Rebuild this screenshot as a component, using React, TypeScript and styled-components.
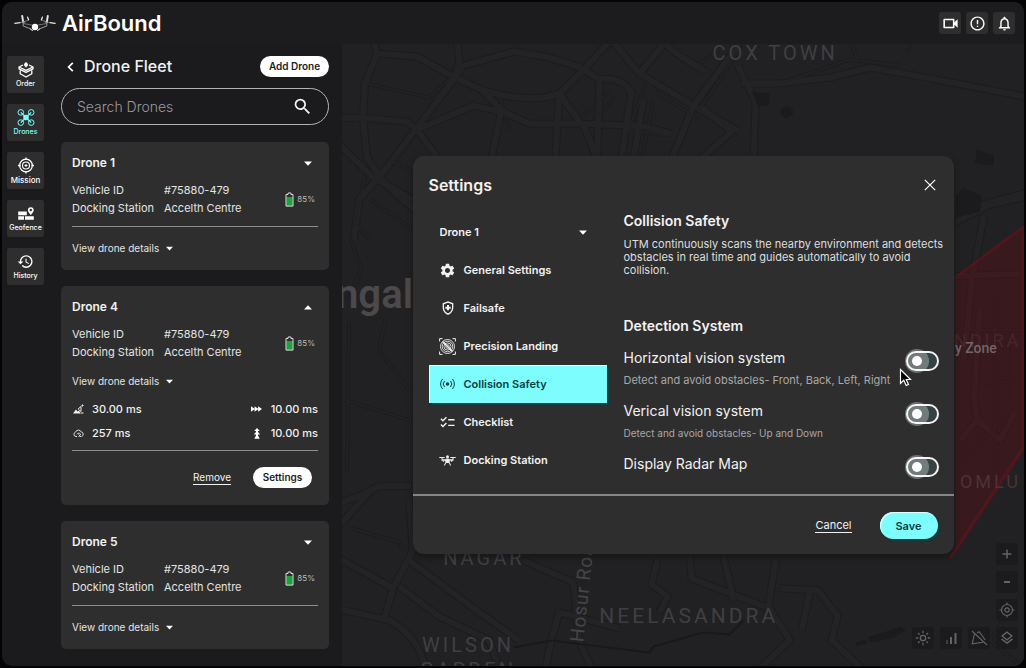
import React from "react";
import styled, { createGlobalStyle, css } from "styled-components";
import {
  MdOutlineVideocam,
  MdErrorOutline,
  MdNotificationsNone,
  MdHistory,
  MdSettings,
  MdOutlineHealthAndSafety,
  MdChecklist,
  MdSearch,
  MdOutlineLayers,
} from "react-icons/md";

const color = {
  bar: "#1c1c1e",
  panel: "#1b1b1d",
  card: "#2e2e2e",
  line: "#8f8f8f",
  text: "#f2f2f2",
  muted: "#a8a8a8",
  cyan: "#7dfdfe",
  teal: "#0a3f42",
};

const GlobalStyle = createGlobalStyle`
  * { box-sizing: border-box; }
  body {
    margin: 0;
    background: #040404;
    color: ${color.text};
    font-family: Inter, "Liberation Sans", sans-serif;
    font-size: 11px;
  }
  button, input, select { font: inherit; color: inherit; }
  h1, h2, h3, p, dl, dd, dt, ul { margin: 0; padding: 0; }
`;

const Shell = styled.div`
  display: flex;
  flex-direction: column;
  min-height: calc(100vh - 4px);
  margin: 2px;
  border-radius: 10px;
  overflow: hidden;
  background: ${color.panel};
`;

/* ---------- top bar ---------- */

const TopBar = styled.header`
  display: flex;
  align-items: center;
  justify-content: space-between;
  height: 42px;
  padding: 0 9px 0 12px;
  background: ${color.bar};
`;

const Brand = styled.h1`
  display: flex;
  align-items: center;
  gap: 6px;
  font-size: 22px;
  font-weight: 600;
  line-height: 28px;
  color: #fff;
`;

const TopActions = styled.div`
  display: flex;
  gap: 5px;
`;

const SquareButton = styled.button<{ $dim?: boolean }>`
  display: grid;
  place-items: center;
  width: 22px;
  height: 22px;
  padding: 0;
  border: 0;
  border-radius: 3px;
  background: ${(p) => (p.$dim ? "#1b1b1d" : "#2e2e2e")};
  color: ${(p) => (p.$dim ? "#646464" : "#fff")};
`;

/* ---------- left columns ---------- */

const Workspace = styled.div`
  display: flex;
  flex: 1;
`;

const Rail = styled.nav`
  display: flex;
  flex-direction: column;
  gap: 11px;
  padding: 12px 0 0 5px;
`;

const RailItem = styled.button<{ $active?: boolean; $large?: boolean }>`
  display: flex;
  flex-direction: column;
  align-items: center;
  gap: 1px;
  width: 37px;
  height: 37px;
  padding: 5px 0 0;
  border: 0;
  border-radius: 2px;
  background: ${color.card};
  color: ${(p) => (p.$active ? color.cyan : "#fff")};
  font-size: ${(p) => (p.$large ? 8 : 7)}px;
  font-weight: 500;
  line-height: 10px;
  white-space: nowrap;
`;

const Fleet = styled.section`
  width: 298px;
  padding: 12px 13px 17px 17px;
`;

const FleetHead = styled.div`
  display: flex;
  align-items: center;
  height: 21px;
`;

const FleetTitle = styled.h2`
  flex: 1;
  font-size: 16px;
  font-weight: 500;
  line-height: 21px;
`;

const BackButton = styled.button`
  display: grid;
  place-items: center;
  width: 19px;
  height: 19px;
  margin-right: 4px;
  padding: 0;
  border: 0;
  background: none;
`;

const Pill = styled.button<{ $width: number }>`
  width: ${(p) => p.$width}px;
  height: 21px;
  padding: 0;
  border: 0;
  border-radius: 11px;
  background: #fff;
  color: #1d1d1d;
  font-size: 10px;
  font-weight: 600;
  line-height: 21px;
`;

const SearchBox = styled.label`
  display: flex;
  align-items: center;
  height: 37px;
  margin: 11px 0 17px;
  padding: 0 15px;
  border: 1px solid #b4b4b4;
  border-radius: 19px;
`;

const SearchInput = styled.input`
  flex: 1;
  min-width: 0;
  padding: 0;
  border: 0;
  outline: 0;
  background: none;
  font-size: 14px;
  font-weight: 300;
  &::placeholder { color: #9a9a9a; opacity: 1; }
`;

const CardList = styled.div`
  display: flex;
  flex-direction: column;
  gap: 16px;
`;

const Card = styled.article`
  padding: 13px 11px 15px;
  border-radius: 5px;
  background: ${color.card};
`;

const CardHead = styled.div`
  display: flex;
  align-items: center;
  justify-content: space-between;
  height: 16px;
`;

const CardTitle = styled.h3`
  font-size: 12px;
  font-weight: 600;
  line-height: 16px;
`;

const IconButton = styled.button`
  display: grid;
  place-items: center;
  width: 20px;
  height: 16px;
  padding: 0;
  border: 0;
  background: none;
`;

const CardInfo = styled.div`
  display: flex;
  align-items: center;
  justify-content: space-between;
  margin-top: 10px;
`;

const Facts = styled.dl`
  display: grid;
  grid-template-columns: 92px auto;
  line-height: 18px;
  color: #e4e4e4;
`;

const Battery = styled.span`
  display: flex;
  align-items: center;
  gap: 3px;
  padding-right: 3px;
  font-size: 8px;
  color: #bdbdbd;
`;

const Rule = styled.hr<{ $top: number }>`
  height: 1px;
  margin: ${(p) => p.$top}px 0 0;
  border: 0;
  background: ${color.line};
`;

const DetailsButton = styled.button<{ $open: boolean }>`
  display: flex;
  align-items: center;
  gap: 7px;
  margin-top: ${(p) => (p.$open ? 13 : 14)}px;
  padding: 0;
  border: 0;
  background: none;
  font-size: 10px;
  line-height: 14px;
  color: #e4e4e4;
`;

const Stats = styled.ul`
  display: grid;
  grid-template-columns: 1fr auto;
  margin-top: 9px;
  list-style: none;
  font-weight: 500;
  line-height: 24px;
`;

const Stat = styled.li`
  display: grid;
  grid-template-columns: 12px auto;
  align-items: center;
  justify-content: start;
  gap: 8px;

  svg { justify-self: center; }
`;

const CardActions = styled.div`
  display: flex;
  align-items: center;
  justify-content: flex-end;
  gap: 22px;
  padding: 16px 6px 2px 0;
`;

const TextLink = styled.button<{ $size: number }>`
  padding: 0;
  border: 0;
  border-bottom: 1px solid currentColor;
  background: none;
  font-size: ${(p) => p.$size}px;
  line-height: 13px;
`;

/* ---------- map ---------- */

const MapArea = styled.main`
  position: relative;
  display: grid;
  flex: 1;
  min-width: 0;
  place-items: center;
  background: #212123;
`;

const MapDrawing = styled.svg`
  position: absolute;
  inset: 0;
  width: 100%;
  height: 100%;
  font-family: Roboto, "Liberation Sans", sans-serif;
`;

const MapTools = styled.div`
  position: absolute;
  right: 6px;
  bottom: 17px;
  display: flex;
  flex-direction: column;
  align-items: flex-end;
  gap: 6px;
`;

const ToolRow = styled.div`
  display: flex;
  gap: 6px;
`;

/* ---------- settings dialog ---------- */

const Dialog = styled.section`
  position: relative;
  width: min(541px, calc(100% - 32px));
  border-radius: 11px;
  background: ${color.card};
  box-shadow: 0 3px 6px rgba(0, 0, 0, 0.35);
`;

const DialogHead = styled.header`
  display: flex;
  align-items: center;
  justify-content: space-between;
  padding: 16px 14px 15px 16px;
`;

const DialogTitle = styled.h2`
  font-size: 16px;
  font-weight: 600;
  line-height: 26px;
`;

const DialogBody = styled.div`
  display: grid;
  grid-template-columns: 178px 1fr;
  gap: 17px;
  padding: 0 0 15px 16px;
`;

const Menu = styled.nav`
  display: flex;
  flex-direction: column;
  font-weight: 600;
`;

const DronePicker = styled.label`
  display: grid;
  grid-template-columns: 1fr 8px;
  align-items: center;
  height: 38px;
  padding: 0 20px 0 11px;
`;

const DroneSelect = styled.select`
  grid-area: 1 / 1 / 2 / 3;
  width: 100%;
  padding: 0;
  border: 0;
  outline: 0;
  appearance: none;
  background: none;
`;

const PickerArrow = styled.span`
  display: grid;
  grid-area: 1 / 2;
  pointer-events: none;
`;

const MenuItem = styled.button<{ $active?: boolean }>`
  display: flex;
  align-items: center;
  gap: 7px;
  height: 38px;
  padding: 0 10px;
  border: 0;
  background: none;
  text-align: left;
  ${(p) =>
    p.$active &&
    css`
      background: ${color.cyan};
      color: ${color.teal};
      box-shadow: inset 1px 1px 0 #d8ffff, 2px 2px 0 ${color.teal};
    `}
`;

const MenuIcon = styled.span`
  display: grid;
  place-items: center;
  width: 18px;
`;

const Content = styled.div`
  padding-right: 4px;
`;

const SectionTitle = styled.h3`
  font-size: 14px;
  font-weight: 600;
  line-height: 16px;
`;

const Intro = styled.p`
  margin: 9px 0 41px;
  line-height: 13px;
  color: #dedede;
`;

const Option = styled.label`
  display: flex;
  justify-content: space-between;
  margin-top: 15px;
  padding-right: 11px;
`;

const OptionText = styled.span`
  display: flex;
  flex-direction: column;
  gap: 7px;
`;

const OptionName = styled.span`
  font-size: 14px;
  line-height: 18px;
`;

const OptionHint = styled.span<{ $small?: boolean }>`
  font-size: ${(p) => (p.$small ? 10 : 11)}px;
  line-height: 13px;
  color: ${color.muted};
`;

const Switch = styled.input`
  display: flex;
  align-items: center;
  width: 33px;
  height: 20px;
  margin: 2px 0 0;
  padding-left: 4px;
  border: 2px solid #f4f4f4;
  border-radius: 10px;
  appearance: none;
  background: #344244;

  &::before {
    content: "";
    width: 10px;
    height: 10px;
    border-radius: 50%;
    background: #fff;
    box-shadow: 0 0 0 7px rgba(255, 255, 255, 0.3);
  }
  &:checked {
    justify-content: flex-end;
    padding: 0 4px 0 0;
  }
`;

const DialogFoot = styled.footer`
  display: flex;
  align-items: center;
  justify-content: flex-end;
  gap: 28px;
  padding: 16px 16px 15px;
  border-top: 2px solid #858585;
`;

const SaveButton = styled.button`
  width: 58px;
  height: 27px;
  padding: 0;
  border: 0;
  border-radius: 14px;
  background: ${color.cyan};
  color: ${color.teal};
  font-weight: 600;
  box-shadow: inset 1px 1px 1px #e8ffff, 2px 2px 1px ${color.teal};
`;

const Pointer = styled.svg`
  position: absolute;
  left: 486px;
  top: 212px;
  pointer-events: none;
`;

/* ---------- icons ---------- */

const Triangle = ({ up, size = 8 }: { up?: boolean; size?: number }) => (
  <svg width={size} height="5" viewBox="0 0 8 5" fill="#fff" aria-hidden="true">
    <path d={up ? "M0 4.5h8L4 .3z" : "M0 .5h8L4 4.7z"} />
  </svg>
);

const BrandMark = () => (
  <svg width="42" height="20" viewBox="0 0 42 20" fill="none" stroke="#e8e8e8" strokeLinecap="round" aria-hidden="true">
    <path d="M.8 10.400l5.400-.8M8 9.200l3-.5M31 8.700l3 .5M35.800 9.600l5.400.8" strokeWidth="1.100" />
    <path d="M8.200 3l.8 5M33.800 3l-.8 5" strokeWidth="1.900" />
    <path d="M9.200 9v4l7.800 3M32.800 9v4L25 16" strokeWidth=".9" stroke="#a8a8a8" />
    <path d="M14.500 7l-5 2M27.500 7l5 2M9.500 10.500l8 1.500M32.500 10.500l-8 1.500" strokeWidth=".8" stroke="#8a8a8a" />
    <path d="M13.600 4.200l1 2.600M28.400 4.200l-1 2.600" strokeWidth="1.300" />
    <path d="M16.500 16.200l2 1.300M25.500 16.200l-2 1.300" strokeWidth="1" />
    <circle cx="21" cy="14" r="3.200" fill="#fff" stroke="none" />
  </svg>
);

const OrderIcon = () => (
  <svg width="18" height="17" viewBox="0 0 18 17" fill="none" stroke="#fff" strokeWidth="1.3" strokeLinejoin="round" aria-hidden="true">
    <path d="M6 4L2 6l7 3.300L16 6l-4-2M2 6v1.800l7 3.600 7-3.600V6M3.200 9.500v3.300L9 16l5.800-3.200V9.500" />
    <path d="M9 1v5.500" strokeWidth="1" />
    <circle cx="9" cy="3.800" r="2" fill="#fff" stroke="none" />
  </svg>
);

const DroneIcon = () => (
  <svg width="18" height="17" viewBox="0 0 18 17" fill="none" stroke="currentColor" strokeWidth="1" aria-hidden="true">
    <circle cx="3.8" cy="3.4" r="2.8" />
    <circle cx="14.2" cy="3.4" r="2.8" />
    <circle cx="3.8" cy="13.6" r="2.8" />
    <circle cx="14.2" cy="13.6" r="2.8" />
    <path d="M3.8 3.4l10.4 10.200M14.2 3.4l-10.4 10.200" strokeWidth="1.3" />
    <rect x="6.8" y="6.300" width="4.4" height="4.4" rx="1" fill="currentColor" />
  </svg>
);

const MissionIcon = () => (
  <svg width="18" height="17" viewBox="0 0 18 17" fill="none" stroke="#fff" strokeWidth="1.3" aria-hidden="true">
    <circle cx="9" cy="8.5" r="6.3" />
    <circle cx="9" cy="8.5" r="3.5" strokeWidth="1.1" />
    <path d="M9 .5v2.4M9 14.1v2.4M1 8.5h2.4M14.6 8.5H17" />
    <path d="M9 7v3M7.5 8.5h3" strokeWidth="1" />
  </svg>
);

const GeofenceIcon = () => (
  <svg width="18" height="17" viewBox="0 0 18 17" fill="#fff" aria-hidden="true">
    <path d="M1.2 6.6h8.6v3.6H1.2zM1.2 11.2h5.8v3.6H1.2zM8 11.2h8.8v3.6H8z" />
    <path d="M13.8 2.2a2.9 2.9 0 0 0-2.9 2.9c0 2 2.9 5.1 2.9 5.1s2.9-3.1 2.9-5.1a2.9 2.9 0 0 0-2.9-2.9zm0 4a1.2 1.2 0 1 1 0-2.4 1.2 1.2 0 0 1 0 2.4z" />
  </svg>
);

const BatteryIcon = () => (
  <svg width="9" height="15" viewBox="0 0 9 15" fill="none" aria-hidden="true">
    <rect x="1.300" y="5" width="6.400" height="9" fill="#18a63a" />
    <path d="M1 2.500h2V1h3v1.500h2v11.600H1z" stroke="#dcdcdc" strokeWidth="1" />
  </svg>
);

const AltitudeIcon = () => (
  <svg width="11" height="10" viewBox="0 0 11 10" fill="#eee" aria-hidden="true">
    <path d="M0 9.500L3 5.500l1.600 2 1-1 2.400 3z" />
    <path d="M5 5l3-2.500M8 2.500v5M5.500 5.500l2.500 2M8.500 1.500h2M9.500.5v2M8 9h2.500" stroke="#eee" strokeWidth="1" fill="none" />
  </svg>
);

const CloudIcon = () => (
  <svg width="11" height="9" viewBox="0 0 11 9" fill="none" stroke="#ddd" strokeWidth="1" aria-hidden="true">
    <path d="M4 7.500H3a2.200 2.200 0 0 1-.5-4.300A3.100 3.100 0 0 1 8.300 3a2.300 2.300 0 0 1 .2 4.500" />
    <path d="M3.800 5.200c1-1.400 3-1.400 3.800 0L5.700 8M5.500 5.500l2.500 2.500" />
  </svg>
);

const ArrowsIcon = ({ up }: { up?: boolean }) => (
  <svg width={up ? 8 : 11} height={up ? 11 : 6} viewBox={up ? "0 0 8 11" : "0 0 11 6"} fill="#fff" aria-hidden="true">
    <path
      d={
        up
          ? "M4 0l2.800 3H5v1l2.200 2.500H5v1L6.700 10.800H1.300L3 7.500v-1H.8L3 4V3H1.200z"
          : "M0 .3L3.900 3 0 5.700zM3.600 .3L7.500 3 3.600 5.700zM7.100 .3L11 3 7.100 5.700z"
      }
    />
  </svg>
);

const LandingIcon = () => (
  <svg width="17" height="17" viewBox="0 0 17 17" fill="none" stroke="#eee" strokeWidth=".9" aria-hidden="true">
    <path d="M.6 3.500V.6h2.900M13.500.6h2.900v2.900M16.400 13.500v2.900h-2.900M3.500 16.400H.6v-2.900" strokeWidth="1" />
    <circle cx="8.500" cy="8.500" r="7" />
    <circle cx="8.500" cy="8.500" r="5.300" />
    <circle cx="8.500" cy="8.500" r="3.600" />
    <circle cx="8.500" cy="8.500" r="1.800" />
    <path d="M3.500 3.500l10 10" strokeWidth="1.600" />
  </svg>
);

const SignalIcon = () => (
  <svg width="15" height="12" viewBox="0 0 15 12" fill="none" stroke="currentColor" strokeWidth="1" strokeLinecap="round" aria-hidden="true">
    <circle cx="7.500" cy="6" r="1.800" fill="currentColor" stroke="none" />
    <path d="M4.300 3.200a4.200 4.200 0 0 0 0 5.600M10.700 3.200a4.200 4.200 0 0 1 0 5.600M2.300 1.300a7 7 0 0 0 0 9.400M12.700 1.300a7 7 0 0 1 0 9.400" />
  </svg>
);

const DockIcon = () => (
  <svg width="17" height="11" viewBox="0 0 17 11" fill="#eee" aria-hidden="true">
    <path d="M.3 2h5.400v1H.3zM11.300 2h5.400v1h-5.400z" />
    <path d="M2.500 2.500h1v1.800h3.200l.8-.8h2l.8.800h3.200V2.500h1v3.200h-1.300v1.100h-1.200V5.700h-1.300v1.700l1.500 3h-1.100L9.800 7.900H7.200l-1.300 2.500H4.800l1.500-3V5.700H5v1.100H3.800V5.700H2.500z" />
    <circle cx="8.500" cy="1.800" r="1.500" />
  </svg>
);

const TargetIcon = () => (
  <svg width="16" height="16" viewBox="0 0 16 16" fill="none" stroke="currentColor" strokeWidth="1.200" aria-hidden="true">
    <circle cx="8" cy="8" r="5.500" />
    <circle cx="8" cy="8" r="2.200" />
    <path d="M8 .5v2M8 13.500v2M.5 8h2M13.500 8h2" />
  </svg>
);

const SunIcon = () => (
  <svg width="16" height="16" viewBox="0 0 16 16" fill="none" stroke="currentColor" strokeWidth="1.300" aria-hidden="true">
    <circle cx="8" cy="8" r="2.700" />
    <path d="M8 .8v2.400M8 12.800v2.400M.8 8h2.400M12.800 8h2.400M3 3l1.600 1.600M11.400 11.400L13 13M13 3l-1.600 1.600M4.600 11.400L3 13" />
  </svg>
);

const BarsIcon = () => (
  <svg width="12" height="12" viewBox="0 0 12 12" fill="currentColor" aria-hidden="true">
    <path d="M5 5h2v7H5zM9.500 1h2v11h-2z" />
    <path d="M1 8h2v4H1z" opacity=".45" />
  </svg>
);

const NoFlyIcon = () => (
  <svg width="17" height="16" viewBox="0 0 17 16" fill="none" stroke="currentColor" strokeWidth="1.100" aria-hidden="true">
    <path d="M3.500 3.500L1.200 13.800l10.800-1.500M6 3l2.200-1.200 6 8.200" />
    <path d="M1 1l15 14" />
  </svg>
);

/* ---------- data ---------- */

const drones = [
  { name: "Drone 1", open: false },
  { name: "Drone 4", open: true },
  { name: "Drone 5", open: false },
];

const stats = [
  { icon: <AltitudeIcon />, value: "30.00 ms" },
  { icon: <ArrowsIcon />, value: "10.00 ms" },
  { icon: <CloudIcon />, value: "257 ms" },
  { icon: <ArrowsIcon up />, value: "10.00 ms" },
];

const railItems = [
  { label: "Order", icon: <OrderIcon /> },
  { label: "Drones", icon: <DroneIcon />, active: true },
  { label: "Mission", icon: <MissionIcon />, large: true },
  { label: "Geofence", icon: <GeofenceIcon /> },
  { label: "History", icon: <MdHistory size={17} /> },
];

const menuItems = [
  { label: "General Settings", icon: <MdSettings size={17} /> },
  { label: "Failsafe", icon: <MdOutlineHealthAndSafety size={16} /> },
  { label: "Precision Landing", icon: <LandingIcon /> },
  { label: "Collision Safety", icon: <SignalIcon />, active: true },
  { label: "Checklist", icon: <MdChecklist size={17} /> },
  { label: "Docking Station", icon: <DockIcon /> },
];

const options = [
  { name: "Horizontal vision system", hint: "Detect and avoid obstacles- Front, Back, Left, Right" },
  { name: "Verical vision system", hint: "Detect and avoid obstacles- Up and Down", small: true },
  { name: "Display Radar Map" },
];

const wideRoads = [
  "M374 40L378 54 418 57 456 78 482 90Q530 105 560 94L584 70 612 40",
  "M378 54L366 84 364 118 368 158 386 184 420 214",
  "M456 78L464 66 515 52 550 58 582 68",
  "M458 40L460 62 456 78 418 128 386 170 360 200 355 240",
  "M336 118L364 118 408 122 418 130 440 160",
  "M418 130L474 106 502 112 492 160",
  "M482 90L504 112 530 124 580 124 640 126 672 134",
  "M336 140L372 176 414 200",
  "M560 94L556 160M560 94L586 130 598 160",
  "M584 70L600 80 598 160M612 40L640 74 694 106 740 132",
  "M600 80Q620 76 632 92L622 160M644 100L634 160",
  "M740 44L694 106 672 160M738 66L756 102 754 160",
  "M660 40L680 56 706 72 M640 74L668 40",
  "M742 84L780 84 830 78 870 68 926 78 1030 98",
  "M700 106L732 132 700 160",
  "M956 222L990 205 1030 196M956 212L1030 192",
  "M984 216L972 280 964 360M956 276L1020 274",
  "M980 310L974 400 978 420 960 440M978 420L1000 440 1016 410",
  "M336 556L394 588 414 550 410 500M400 586L440 616 490 640 500 668",
  "M336 608L390 620Q420 636 426 668M394 588L384 622",
  "M410 560L480 612 520 640",
  "M524 560L574 582M574 582L580 640 592 668",
  "M560 612L552 640 546 668M560 612L620 628",
  "M658 560L652 584 668 596 660 612M690 556L692 578 738 596 770 608 790 640 760 668",
  "M724 556L734 600M776 560L768 612",
  "M780 588L818 590 838 615 832 640 862 668M810 592L802 630",
  "M336 504L360 496 380 486 412 486M336 530L372 490",
];

const fineRoads = [
  "M368 84L430 98M430 98L452 78M366 176L356 224 372 240",
  "M390 160L414 172M372 200L414 230M352 240L362 270 350 300",
  "M610 92L584 116M616 98L594 120M646 84L626 140M654 100L642 160",
  "M656 92L700 120M628 130L670 136M500 95L510 130",
  "M718 52L700 64M730 40L700 30M740 50L700 110",
  "M780 84L850 60 900 66M852 44L858 62",
  "M910 44L908 54M352 528L400 542 404 550",
  "M995 300V470M1008 330V400M966 330H1024M970 386L1018 380M966 458L1000 420",
  "M350 322L348 470M386 320L380 350 410 390M346 400L410 420",
  "M1024 590L990 640 1024 668",
];

const Label = ({ x, y, size = 20, text, fill = "#3f3f42" }: { x: number; y: number; size?: number; text: string; fill?: string }) => (
  <text x={x} y={y} fontSize={size} fill={fill} letterSpacing="3">
    {text}
  </text>
);

const CityMap = () => (
  <MapDrawing viewBox="343 44 681 622" preserveAspectRatio="xMidYMid slice" aria-hidden="true">
    <rect x="0" y="0" width="1400" height="900" fill="#212123" />
    <g fill="none" strokeLinejoin="round">
      <g stroke="#1c1c1e" strokeWidth="8">
        {wideRoads.map((d) => <path key={d} d={d} />)}
      </g>
      <g stroke="#1d1d1f" strokeWidth="4">
        {fineRoads.map((d) => <path key={d} d={d} />)}
      </g>
      <g stroke="#232325" strokeWidth="6">
        {wideRoads.map((d) => <path key={d} d={d} />)}
      </g>
      <g stroke="#222224" strokeWidth="2">
        {fineRoads.map((d) => <path key={d} d={d} />)}
      </g>
      <path d="M514 647L552 640 650 652 654 646 704 632 730 634 744 620" stroke="#19191b" strokeWidth="2" />
    </g>
    <g fill="#1b1b1d">
      <path d="M752 92L770 94 769 106 758 106zM781 110l6-4 6 3v6l-6 4-6-4zM977 150l17 6-1 10-18-3zM956 196l8-8 18 8-2 16-24 6zM856 642l10-3 1 4-10 3zM868 636l16-4 16-6 6 4-14 8-22 4z" />
    </g>
    <path d="M1030 222L955 278V555L1028 446z" fill="rgba(92, 14, 22, 0.4)" />
    <path d="M1030 222L955 278M950 558L1028 440M1023 228V450" stroke="#5a161c" strokeWidth="3" fill="none" opacity=".7" />
    <Label x={713} y={60} text="COX TOWN" />
    <Label x={444} y={565} text="NAGAR" />
    <Label x={600} y={623} size={21} text="NEELASANDRA" />
    <Label x={423} y={652} text="WILSON" />
    <Label x={421} y={677} text="GARDEN" />
    <Label x={954} y={347} size={18} text="NDIRA" fill="#452729" />
    <Label x={960} y={488} size={18} text="OMLU" fill="#4b3336" />
    <text x="337" y="308" fontSize="40" fontWeight="600" fill="#4b494b">ngal</text>
    <text x="955" y="353" fontSize="14" fontWeight="500" fill="#726467">y Zone</text>
    <text transform="translate(584 642) rotate(-84)" fontSize="19" letterSpacing="1" fill="#454548">Hosur Road</text>
  </MapDrawing>
);

const DroneCard = ({ name, open }: { name: string; open: boolean }) => (
  <Card>
    <CardHead>
      <CardTitle>{name}</CardTitle>
      <IconButton aria-label={`Toggle ${name}`} aria-expanded={open}>
        <Triangle up={open} />
      </IconButton>
    </CardHead>
    <CardInfo>
      <Facts>
        <dt>Vehicle ID</dt>
        <dd>#75880-479</dd>
        <dt>Docking Station</dt>
        <dd>Accelth Centre</dd>
      </Facts>
      <Battery>
        <BatteryIcon />
        85%
      </Battery>
    </CardInfo>
    {!open && <Rule $top={9} />}
    <DetailsButton $open={open}>
      View drone details
      <Triangle size={7} />
    </DetailsButton>
    {open && (
      <>
        <Stats>
          {stats.map((s, i) => (
            <Stat key={i}>
              {s.icon}
              {s.value}
            </Stat>
          ))}
        </Stats>
        <Rule $top={5} />
        <CardActions>
          <TextLink $size={10}>Remove</TextLink>
          <Pill $width={59}>Settings</Pill>
        </CardActions>
      </>
    )}
  </Card>
);

const SettingsDialog = () => (
  <Dialog role="dialog" aria-labelledby="settings-title">
    <DialogHead>
      <DialogTitle id="settings-title">Settings</DialogTitle>
      <IconButton aria-label="Close">
        <svg width="12" height="12" viewBox="0 0 12 12" stroke="#fff" strokeWidth="1.200">
          <path d="M.8.8l10.400 10.400M11.200.8L.8 11.200" />
        </svg>
      </IconButton>
    </DialogHead>
    <DialogBody>
      <Menu>
        <DronePicker>
          <DroneSelect aria-label="Drone" defaultValue="Drone 1">
            <option>Drone 1</option>
          </DroneSelect>
          <PickerArrow>
            <Triangle />
          </PickerArrow>
        </DronePicker>
        {menuItems.map((m) => (
          <MenuItem key={m.label} $active={m.active}>
            <MenuIcon>{m.icon}</MenuIcon>
            {m.label}
          </MenuItem>
        ))}
      </Menu>
      <Content>
        <SectionTitle>Collision Safety</SectionTitle>
        <Intro>
          UTM continuously scans the nearby environment and detects obstacles in real time and guides automatically to
          avoid collision.
        </Intro>
        <SectionTitle>Detection System</SectionTitle>
        {options.map((o) => (
          <Option key={o.name}>
            <OptionText>
              <OptionName>{o.name}</OptionName>
              {o.hint && <OptionHint $small={o.small}>{o.hint}</OptionHint>}
            </OptionText>
            <Switch type="checkbox" role="switch" />
          </Option>
        ))}
      </Content>
    </DialogBody>
    <DialogFoot>
      <TextLink $size={11}>Cancel</TextLink>
      <SaveButton>Save</SaveButton>
    </DialogFoot>
    <Pointer width="13" height="19" viewBox="0 0 13 19" aria-hidden="true">
      <path d="M1.500 1.500v13.800l3.300-3 2.400 5.200 2.300-1-2.300-5h4.300z" fill="#000" stroke="#fff" strokeWidth="1.200" />
    </Pointer>
  </Dialog>
);

export default function App() {
  return (
    <>
      <GlobalStyle />
      <Shell>
        <TopBar>
          <Brand>
            <BrandMark />
            AirBound
          </Brand>
          <TopActions>
            <SquareButton aria-label="Video"><MdOutlineVideocam size={19} /></SquareButton>
            <SquareButton aria-label="Alerts"><MdErrorOutline size={17} /></SquareButton>
            <SquareButton aria-label="Notifications"><MdNotificationsNone size={17} /></SquareButton>
          </TopActions>
        </TopBar>
        <Workspace>
          <Rail>
            {railItems.map((r) => (
              <RailItem key={r.label} $active={r.active} $large={r.large}>
                {r.icon}
                {r.label}
              </RailItem>
            ))}
          </Rail>
          <Fleet>
            <FleetHead>
              <BackButton aria-label="Back">
                <svg width="7" height="10" viewBox="0 0 7 10" fill="none" stroke="#fff" strokeWidth="1.700">
                  <path d="M5.800.8L1.600 5l4.200 4.200" />
                </svg>
              </BackButton>
              <FleetTitle>Drone Fleet</FleetTitle>
              <Pill $width={69}>Add Drone</Pill>
            </FleetHead>
            <SearchBox>
              <SearchInput type="search" placeholder="Search Drones" aria-label="Search Drones" />
              <MdSearch size={21} />
            </SearchBox>
            <CardList>
              {drones.map((d) => (
                <DroneCard key={d.name} {...d} />
              ))}
            </CardList>
          </Fleet>
          <MapArea>
            <CityMap />
            <MapTools>
              <SquareButton $dim aria-label="Zoom in">
                <svg width="10" height="10" viewBox="0 0 10 10" stroke="currentColor" strokeWidth="1.500"><path d="M5 .5v9M.5 5h9" /></svg>
              </SquareButton>
              <SquareButton $dim aria-label="Zoom out">
                <svg width="6" height="2" viewBox="0 0 6 2" fill="currentColor"><path d="M0 0h6v2H0z" /></svg>
              </SquareButton>
              <SquareButton $dim aria-label="Locate"><TargetIcon /></SquareButton>
              <ToolRow>
                <SquareButton $dim aria-label="Brightness"><SunIcon /></SquareButton>
                <SquareButton $dim aria-label="Signal"><BarsIcon /></SquareButton>
                <SquareButton $dim aria-label="No-fly zones"><NoFlyIcon /></SquareButton>
                <SquareButton $dim aria-label="Layers"><MdOutlineLayers size={16} /></SquareButton>
              </ToolRow>
            </MapTools>
            <SettingsDialog />
          </MapArea>
        </Workspace>
      </Shell>
    </>
  );
}
